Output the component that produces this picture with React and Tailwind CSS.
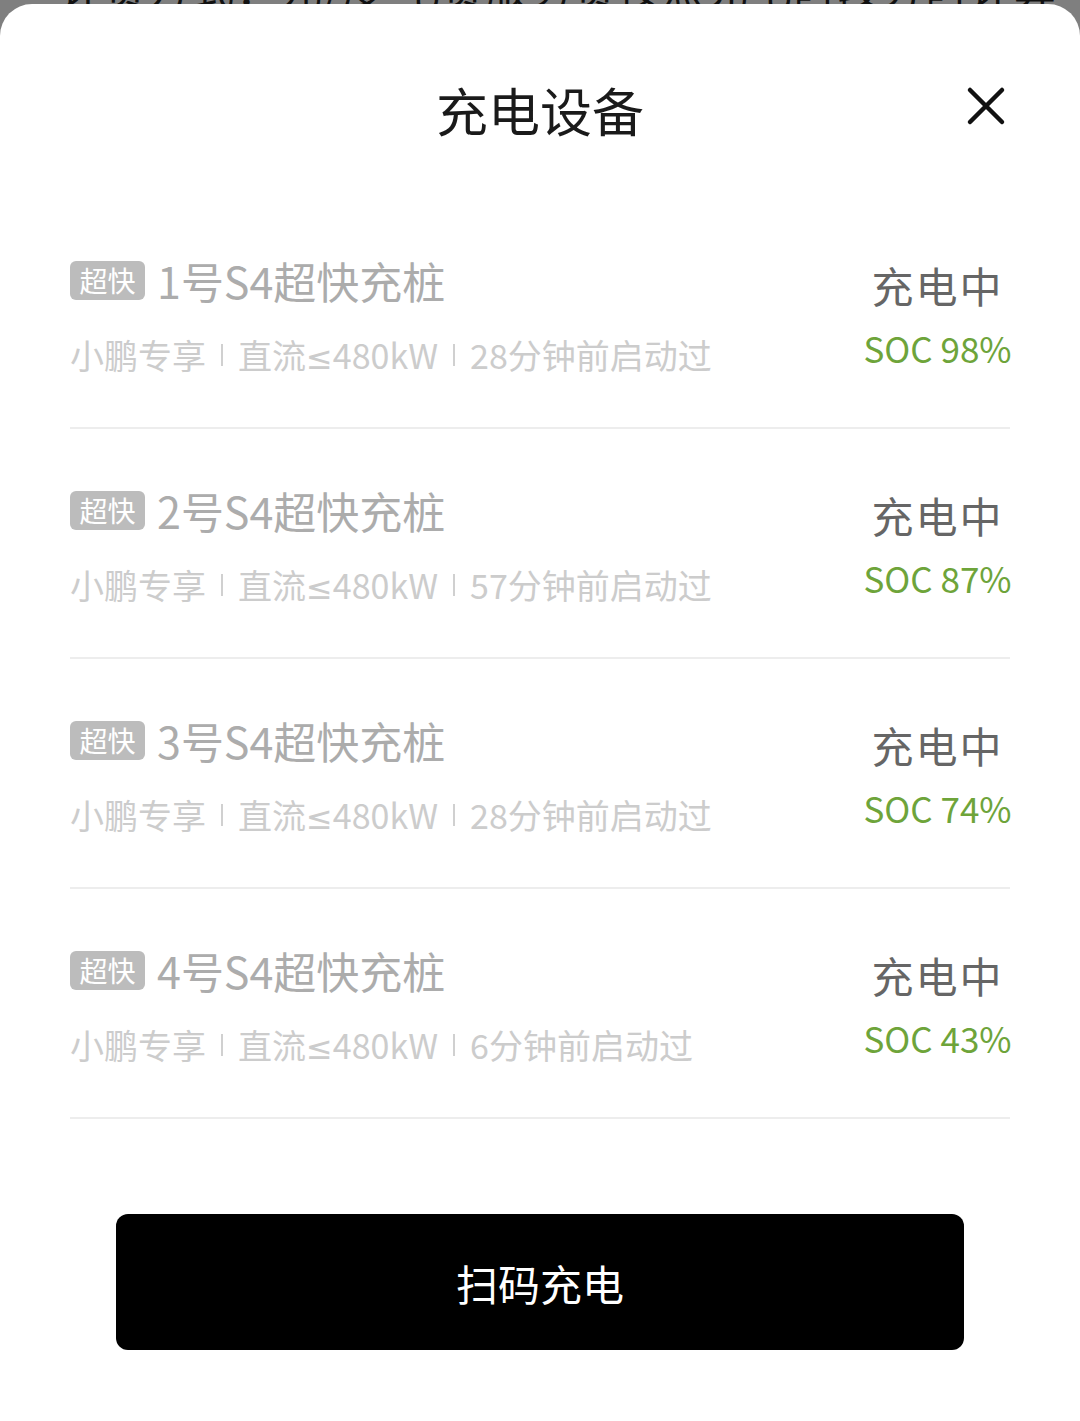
import React from "react";

const rows = [
  { n: "1", t: "28分钟前启动过", soc: "98%" },
  { n: "2", t: "57分钟前启动过", soc: "87%" },
  { n: "3", t: "28分钟前启动过", soc: "74%" },
  { n: "4", t: "6分钟前启动过", soc: "43%" },
];

const font = { fontFamily: '"Noto Sans CJK SC", "Noto Sans", sans-serif' };

function Bar() {
  return (
    <span className="inline-block w-[2px] h-[22px] bg-[#d0d0d0] mx-[15px] align-[3px]" />
  );
}

export default function App() {
  return (
    <div
      className="relative w-[1080px] h-[1421px] overflow-hidden bg-[#7f7f7f]"
      style={font}
    >
      <div className="absolute left-[60px] top-[-38px] text-[42px] leading-[50px] text-[#111] whitespace-nowrap tracking-[2px]">
        计费方式：元/度 电费服务费按照充电时段分时计算 <span className="ml-[120px]">今天</span>
      </div>
      <div className="relative mt-[4px] h-[1417px] bg-white rounded-t-[32px]">
        <div className="relative h-[195px]">
          <div className="pt-[76px] text-center text-[52px] leading-[60px] text-[#1a1a1a]">
            充电设备
          </div>
          <svg
            className="absolute left-[966px] top-[82px]"
            width="40"
            height="40"
            viewBox="0 0 40 40"
          >
            <path
              d="M4 4 L36 36 M36 4 L4 36"
              stroke="#111"
              strokeWidth="4.5"
              strokeLinecap="round"
            />
          </svg>
        </div>
        <div className="px-[70px]">
          {rows.map((r) => (
            <div
              key={r.n}
              className="flex justify-between h-[230px] border-b-2 border-[#ededed]"
            >
              <div className="pt-[56px] flex flex-col">
                <div className="flex items-center h-[50px]">
                  <span className="flex items-center justify-center w-[75px] h-[39px] rounded-[6px] bg-[#bcbcbc] text-white text-[28px] leading-none">
                    超快
                  </span>
                  <span className="ml-[12px] text-[43px] leading-[50px] text-[#acacac]">
                    {r.n}号S4超快充桩
                  </span>
                </div>
                <div className="mt-[27px] text-[34px] leading-[46px] text-[#cccccc] whitespace-nowrap">
                  小鹏专享<Bar />直流
                  <span style={{ fontFamily: '"DejaVu Sans", "Noto Sans", sans-serif' }} className="text-[32px]">≤</span>
                  480kW<Bar />{r.t}
                </div>
              </div>
              <div className="pt-[61px] flex flex-col items-center w-[145px]">
                <div className="text-[42px] leading-[50px] text-[#666] tracking-[2px]">
                  充电中
                </div>
                <div className="mt-[16px] text-[35px] leading-[44px] text-[#6ea43a] whitespace-nowrap">
                  SOC {r.soc}
                </div>
              </div>
            </div>
          ))}
        </div>
        <div className="px-[116px] mt-[95px]">
          <button className="w-full h-[136px] rounded-[12px] bg-black text-white text-[42px] flex items-center justify-center">
            扫码充电
          </button>
        </div>
      </div>
    </div>
  );
}
